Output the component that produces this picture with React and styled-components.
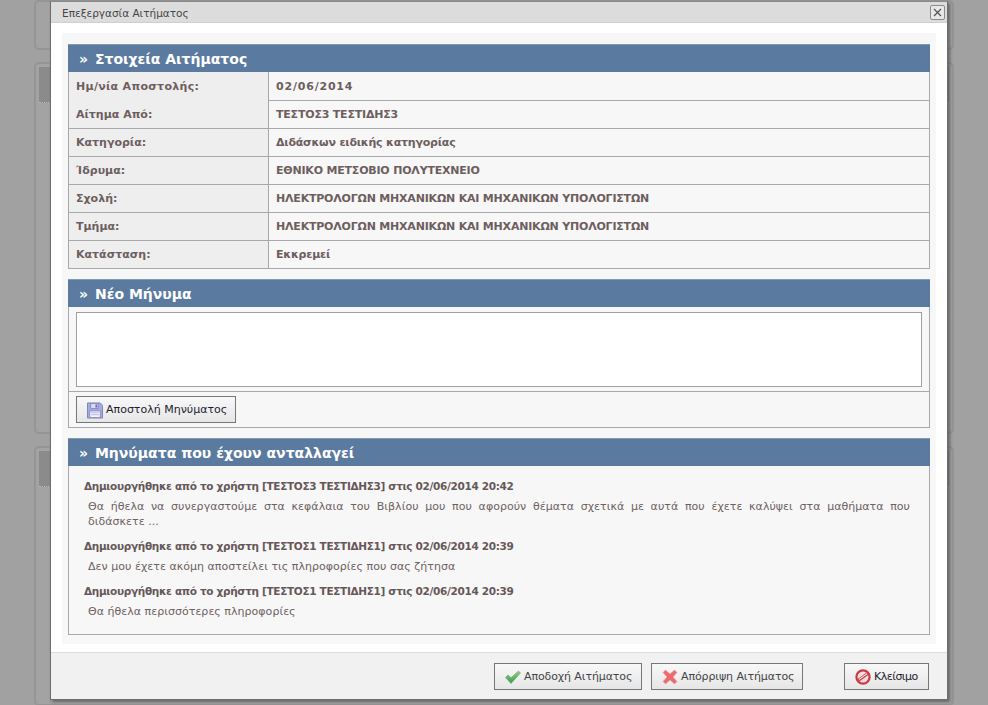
import React from "react";
import styled, { createGlobalStyle } from "styled-components";

const GlobalStyle = createGlobalStyle`
  html, body { margin: 0; padding: 0; height: 100%; overflow: hidden; background: #a1a1a1; }
  * { box-sizing: border-box; }
`;

const Page = styled.div`
  position: relative;
  width: 988px;
  height: 705px;
  overflow: hidden;
  padding: 0 34px;
  display: flex;
  flex-direction: column;
  gap: 12px;
  background: #a1a1a1;
  font-family: "DejaVu Sans", Verdana, sans-serif;
`;

const BackCard = styled.div`
  height: ${(p) => p.$h}px;
  flex: none;
  border: 2px solid #959595;
  border-radius: 5px;
  background: #a3a3a3;
`;

const BackHead = styled.div`
  height: 36px;
  margin: 3px;
  background: #8b8b8b;
  border-bottom: 1px dotted #b8b8b8;
`;

const Modal = styled.div`
  position: absolute;
  left: 50px;
  top: 1px;
  width: 898px;
  height: 699px;
  background: #fff;
  border: 1px solid #6d6d6d;
  border-top-color: #8a8a8a;
  box-shadow: 2px 2px 3px rgba(60, 60, 60, 0.6);
  display: flex;
  flex-direction: column;
`;

const TitleBar = styled.div`
  height: 21px;
  flex: none;
  background: #dcdcdc;
  border-bottom: 1px solid #cfcfcf;
  padding: 1px 2px 0 11px;
  display: flex;
  align-items: center;
  justify-content: space-between;
  font-size: 10.5px;
  color: #444;
`;

const CloseBox = styled.span`
  width: 15px;
  height: 15px;
  margin-top: -1px;
  border: 1px solid #8a8a8a;
  border-radius: 2px;
  background: #e8e8e8;
  display: flex;
  align-items: center;
  justify-content: center;
`;

const Body = styled.div`
  flex: 1;
  padding: 10px 11px 0;
  min-height: 0;
`;

const Inner = styled.div`
  height: 611px;
  background: #f7f7f7;
  padding: 11px 6px 0;
  display: flex;
  flex-direction: column;
  gap: 10px;
`;

const Section = styled.section`
  border: 1px solid #a8a8a8;
  border-top: 0;
  flex: none;
`;

const SectionHead = styled.h2`
  margin: 0 -1px;
  height: 28px;
  background: #5b7a9f;
  border-top: 1px solid #8498b3;
  color: #fff;
  font-size: 14px;
  font-weight: bold;
  line-height: 29px;
  padding-left: 11px;
`;

const Marker = styled.span`
  margin-right: 2px;
`;

const Row = styled.div`
  display: grid;
  grid-template-columns: 200px 1fr;
  height: 28px;
  border-top: ${(p) => (p.$first ? "0" : "1px solid #a8a8a8")};
  font-size: 11px;
  font-weight: bold;
  color: #6d5e5e;
  line-height: ${(p) => (p.$first ? "29px" : "27px")};
`;

const RowLabel = styled.div`
  background: #eeeeee;
  border-right: 1px solid #a8a8a8;
  padding-left: 7px;
  letter-spacing: ${(p) => (p.$wide ? "0.3px" : "0")};
`;

const RowValue = styled.div`
  padding-left: 7px;
  white-space: nowrap;
  letter-spacing: ${(p) => (p.$wide ? "0.8px" : "-0.2px")};
`;

const MessageBox = styled.div`
  padding: 5px 7px 4px;
  border-bottom: 1px solid #a8a8a8;
`;

const TextArea = styled.div`
  height: 75px;
  background: #fff;
  border: 1px solid #a0a0a0;
`;

const ButtonRow = styled.div`
  padding: 4px 7px;
  display: flex;
`;

const Button = styled.button`
  height: 27px;
  width: ${(p) => p.$w}px;
  margin-left: ${(p) => p.$ml || 0}px;
  flex: none;
  padding: 0 0 0 10px;
  display: flex;
  align-items: center;
  gap: 3px;
  border: 1px solid #777;
  background: linear-gradient(#f8f8f8, #e6e6e6);
  font-family: "DejaVu Sans", Verdana, sans-serif;
  font-size: 11px;
  letter-spacing: ${(p) => p.$ls || 0}px;
  color: ${(p) => (p.$dark ? "#1c1c30" : "#444")};
  white-space: nowrap;
  svg { flex: none; }
`;

const History = styled.div`
  height: 168px;
  padding: 12px 15px 0;
`;

const MsgTitle = styled.div`
  font-size: 10.5px;
  font-weight: bold;
  letter-spacing: -0.33px;
  color: #665858;
  line-height: 16px;
  white-space: nowrap;
`;

const MsgText = styled.p`
  margin: 5px 4px 9px;
  font-size: 11px;
  letter-spacing: 0.03px;
  line-height: 15px;
  color: #6d6060;
`;

const MsgLine = styled.span`
  display: block;
  text-align-last: ${(p) => (p.$justify ? "justify" : "left")};
  white-space: ${(p) => (p.$justify ? "normal" : "nowrap")};
`;

const Footer = styled.div`
  flex: none;
  height: 47px;
  background: #f1f1f1;
  border-top: 1px solid #dddddd;
  display: flex;
  justify-content: flex-end;
  padding: 10px 18px 0 0;
`;

const rows = [
  { label: "Ημ/νία Αποστολής:", value: "02/06/2014", wide: true },
  { label: "Αίτημα Από:", value: "ΤΕΣΤΟΣ3 ΤΕΣΤΙΔΗΣ3" },
  { label: "Κατηγορία:", value: "Διδάσκων ειδικής κατηγορίας" },
  { label: "Ίδρυμα:", value: "ΕΘΝΙΚΟ ΜΕΤΣΟΒΙΟ ΠΟΛΥΤΕΧΝΕΙΟ" },
  { label: "Σχολή:", value: "ΗΛΕΚΤΡΟΛΟΓΩΝ ΜΗΧΑΝΙΚΩΝ ΚΑΙ ΜΗΧΑΝΙΚΩΝ ΥΠΟΛΟΓΙΣΤΩΝ" },
  { label: "Τμήμα:", value: "ΗΛΕΚΤΡΟΛΟΓΩΝ ΜΗΧΑΝΙΚΩΝ ΚΑΙ ΜΗΧΑΝΙΚΩΝ ΥΠΟΛΟΓΙΣΤΩΝ" },
  { label: "Κατάσταση:", value: "Εκκρεμεί" },
];

const messages = [
  {
    title: "Δημιουργήθηκε από το χρήστη [ΤΕΣΤΟΣ3 ΤΕΣΤΙΔΗΣ3] στις 02/06/2014 20:42",
    lines: [
      "Θα ήθελα να συνεργαστούμε στα κεφάλαια του Βιβλίου μου που αφορούν θέματα σχετικά με αυτά που έχετε καλύψει στα μαθήματα που",
      "διδάσκετε ...",
    ],
  },
  {
    title: "Δημιουργήθηκε από το χρήστη [ΤΕΣΤΟΣ1 ΤΕΣΤΙΔΗΣ1] στις 02/06/2014 20:39",
    lines: ["Δεν μου έχετε ακόμη αποστείλει τις πληροφορίες που σας ζήτησα"],
  },
  {
    title: "Δημιουργήθηκε από το χρήστη [ΤΕΣΤΟΣ1 ΤΕΣΤΙΔΗΣ1] στις 02/06/2014 20:39",
    lines: ["Θα ήθελα περισσότερες πληροφορίες"],
  },
];

const SaveIcon = () => (
  <svg width="16" height="18" viewBox="0 0 17 18">
    <path d="M.5 1.5h13.5l2.5 2.5v13.5H.5z" fill="#a6abe0" stroke="#7a7fb8" />
    <rect x="4" y="2" width="8" height="5.5" fill="#d8daf2" stroke="#7a7fb8" strokeWidth="0.8" />
    <rect x="9" y="3" width="2" height="3.5" fill="#6d72ad" />
    <rect x="3" y="10" width="11" height="7" fill="#f5f5fc" stroke="#7a7fb8" strokeWidth="0.8" />
    <path d="M4.5 12h8M4.5 14h8" stroke="#b0b4e2" />
  </svg>
);

const CheckIcon = () => (
  <svg width="16" height="16" viewBox="0 0 16 16">
    <defs>
      <linearGradient id="chk" x1="0" y1="0" x2="0" y2="1">
        <stop offset="0" stopColor="#8fd08a" />
        <stop offset="1" stopColor="#3f9a48" />
      </linearGradient>
    </defs>
    <path d="M0.5 8.5L3 6l3 2.8L13.5 2 15.500 4 6 14.500z" fill="url(#chk)" stroke="#5a9c60" strokeWidth="0.5" />
  </svg>
);

const CrossIcon = () => (
  <svg width="16" height="16" viewBox="0 0 16 16">
    <path d="M3.500 1L8 5l4.500-4L15 3.500 11 8l4 4.500-2.500 2.500L8 11l-4.500 4L1 12.500 5 8 1 3.500z" fill="#ea6a70" stroke="#f0a0a0" strokeWidth="0.6" strokeLinejoin="round" />
  </svg>
);

const StopIcon = () => (
  <svg width="16" height="16" viewBox="0 0 16 16">
    <circle cx="8" cy="8" r="6.6" fill="#f6dcdc" stroke="#c83a44" strokeWidth="2.2" />
    <path d="M3.200 11.500l9.600-7" stroke="#d24a52" strokeWidth="3" />
    <path d="M4 10.500l8-5.800" stroke="#fff" strokeWidth="1" />
  </svg>
);

export default function App() {
  return (
    <>
      <GlobalStyle />
      <Page>
        <BackCard $h={50} />
        <BackCard $h={372}>
          <BackHead />
        </BackCard>
        <BackCard $h={260}>
          <BackHead />
        </BackCard>
        <Modal>
          <TitleBar>
            <span>Επεξεργασία Αιτήματος</span>
            <CloseBox>
              <svg width="9" height="9" viewBox="0 0 9 9">
                <path d="M1 1l7 7M8 1L1 8" stroke="#555" strokeWidth="1.3" />
              </svg>
            </CloseBox>
          </TitleBar>
          <Body>
            <Inner>
              <Section>
                <SectionHead><Marker>»</Marker> Στοιχεία Αιτήματος</SectionHead>
                {rows.map(({ label, value, wide }, i) => (
                  <Row key={label} $first={i === 0}>
                    <RowLabel $wide={wide}>{label}</RowLabel>
                    <RowValue $wide={wide}>{value}</RowValue>
                  </Row>
                ))}
              </Section>
              <Section>
                <SectionHead><Marker>»</Marker> Νέο Μήνυμα</SectionHead>
                <MessageBox>
                  <TextArea />
                </MessageBox>
                <ButtonRow>
                  <Button $w={160} $dark>
                    <SaveIcon />
                    Αποστολή Μηνύματος
                  </Button>
                </ButtonRow>
              </Section>
              <Section>
                <SectionHead><Marker>»</Marker> Μηνύματα που έχουν ανταλλαγεί</SectionHead>
                <History>
                  {messages.map((m, i) => (
                    <div key={i}>
                      <MsgTitle>{m.title}</MsgTitle>
                      <MsgText>
                        {m.lines.map((line, j) => (
                          <MsgLine key={j} $justify={m.lines.length > 1 && j === 0}>
                            {line}
                          </MsgLine>
                        ))}
                      </MsgText>
                    </div>
                  ))}
                </History>
              </Section>
            </Inner>
          </Body>
          <Footer>
            <Button $w={148} $ls={-0.1}>
              <CheckIcon />
              Αποδοχή Αιτήματος
            </Button>
            <Button $w={152} $ml={9} $ls={-0.1}>
              <CrossIcon />
              Απόρριψη Αιτήματος
            </Button>
            <Button $w={85} $ml={41} $ls={-0.5} $dark>
              <StopIcon />
              Κλείσιμο
            </Button>
          </Footer>
        </Modal>
      </Page>
    </>
  );
}
